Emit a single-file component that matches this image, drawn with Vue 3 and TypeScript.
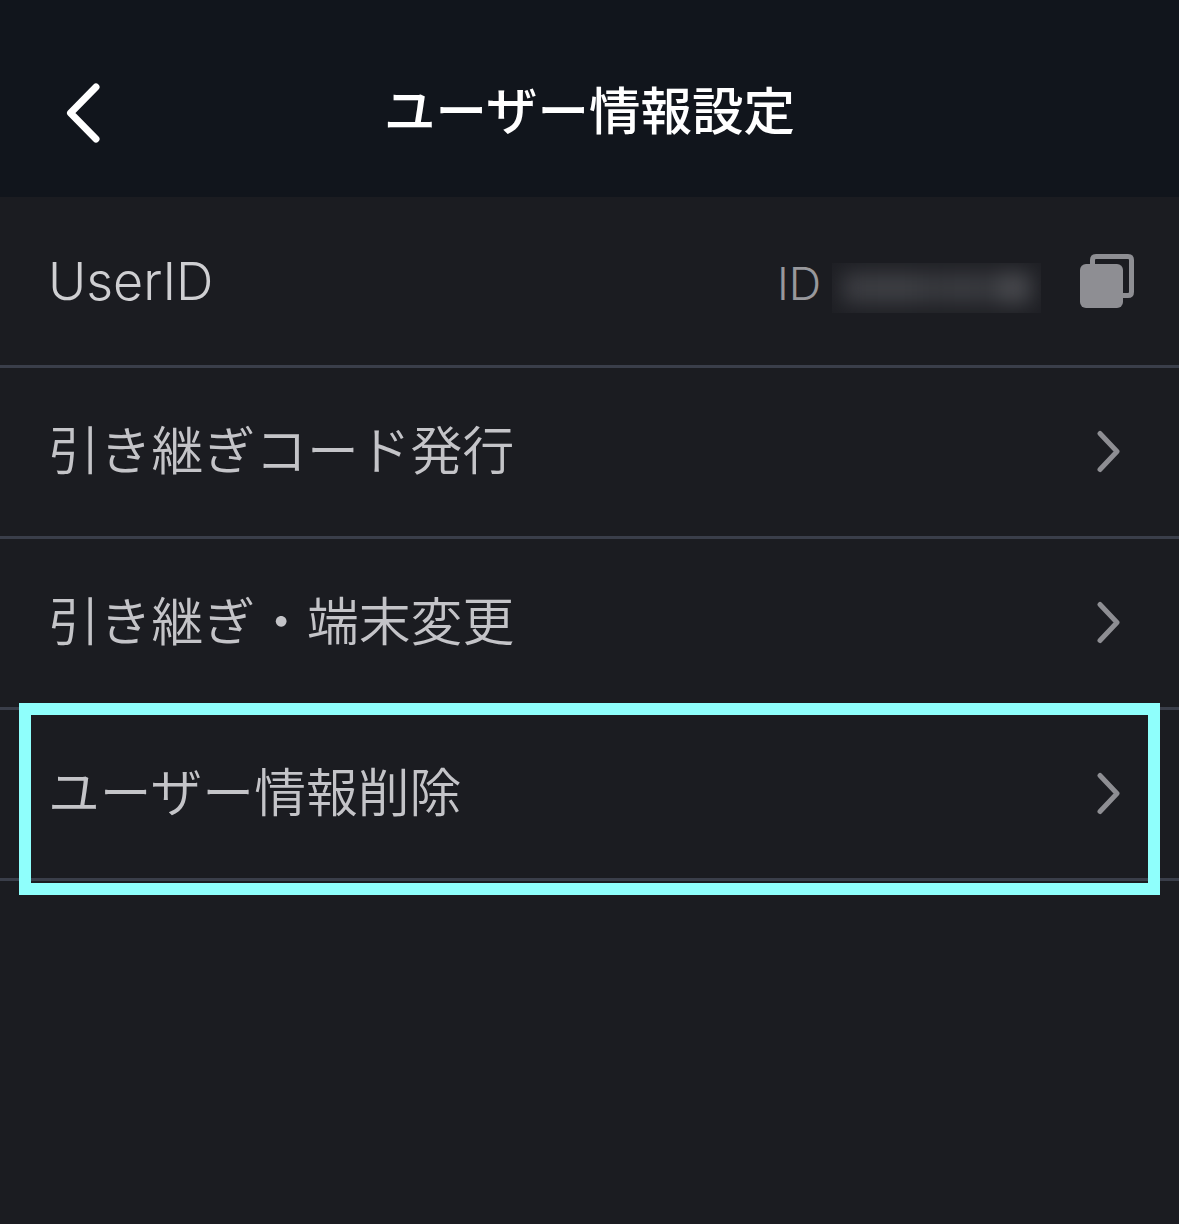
<script setup lang="ts">
const rows: string[] = ['引き継ぎコード発行', '引き継ぎ・端末変更', 'ユーザー情報削除']
</script>

<template>
  <div class="page">
    <header class="header">
      <button class="back" aria-label="戻る">
        <svg width="40" height="64" viewBox="0 0 40 64">
          <path d="M36 8 L10.500 34 L36 60" fill="none" stroke="#fff" stroke-width="7" stroke-linecap="round" stroke-linejoin="round" />
        </svg>
      </button>
      <h1 class="title">ユーザー情報設定</h1>
    </header>
    <main class="list">
      <div class="row">
        <span class="label latin">UserID</span>
        <div class="id">
          <span class="id-prefix">ID</span>
          <span class="masked"><span class="blur"></span></span>
          <svg class="copy" width="56" height="56" viewBox="0 0 56 56">
            <path d="M13.500 11 V7 Q13.500 3.500 17 3.500 H49 Q52.500 3.500 52.500 7 V39 Q52.500 42.500 49 42.500 H44" fill="none" stroke="#8e8e93" stroke-width="5" />
            <rect x="1" y="11" width="43" height="44" rx="6" fill="#8e8e93" />
          </svg>
        </div>
      </div>
      <div v-for="(row, i) in rows" :key="row" class="row" :class="{ target: i === 2 }">
        <span class="label">{{ row }}</span>
        <svg class="chevron" width="28" height="44" viewBox="0 0 28 44">
          <path d="M5 3.500 L22 21.500 L5 39.500" fill="none" stroke="#8e8e93" stroke-width="5" stroke-linecap="round" stroke-linejoin="round" />
        </svg>
        <span v-if="i === 2" class="highlight"></span>
      </div>
    </main>
  </div>
</template>

<style>
html, body { margin: 0; background: #1b1c21; }
</style>

<style scoped>
.page {
  width: 1179px;
  height: 1224px;
  overflow: hidden;
  background: #1b1c21;
  font-family: "Inter", "Noto Sans CJK JP", sans-serif;
}
.header {
  position: relative;
  height: 197px;
  background: #11151c;
  display: flex;
  align-items: center;
  justify-content: center;
}
.back {
  position: absolute;
  left: 60px;
  top: 79px;
  padding: 0;
  border: 0;
  background: none;
  display: flex;
}
.title {
  margin: 18px 0 0;
  font-size: 51.500px;
  line-height: 1;
  font-weight: 500;
  color: #fff;
  font-family: "Noto Sans CJK JP", sans-serif;
}
.row {
  position: relative;
  box-sizing: border-box;
  height: 171px;
  padding: 0 56px 0 48px;
  display: flex;
  align-items: center;
  justify-content: space-between;
  border-bottom: 3px solid #3a3e4a;
}
.label {
  padding-bottom: 8px;
  font-size: 51.800px;
  line-height: 1;
  color: #c4c4c8;
  font-family: "Noto Sans CJK JP", sans-serif;
  font-weight: 350;
}
.label.latin {
  padding-bottom: 0;
  padding-top: 2px;
  font-family: "Inter", sans-serif;
  font-weight: 300;
  font-size: 52px;
  color: #cfcfd2;
}
.id {
  display: flex;
  align-items: center;
  margin-right: -12px;
}
.id-prefix {
  padding-top: 4px;
  padding-left: 2px;
  font-size: 45px;
  font-weight: 300;
  color: #98989c;
  width: 55px;
}
.masked {
  width: 209px;
  height: 50px;
  margin-top: 14px;
  background: #1e1f24;
  overflow: hidden;
  display: flex;
  align-items: center;
  justify-content: center;
  margin-right: 38px;
}
.blur {
  width: 190px;
  height: 32px;
  background: linear-gradient(90deg, #3a3b40 0%, #3e3f44 30%, #36373c 52%, #3b3c41 66%, #333439 76%, #4a4b50 88%, #404146 100%);
  filter: blur(10px);
}
.copy {
  display: block;
}
.chevron {
  display: block;
}
.highlight {
  position: absolute;
  left: 19px;
  right: 19px;
  top: -7px;
  height: 192px;
  box-sizing: border-box;
  border: 12px solid #8ffffc;
}
</style>
